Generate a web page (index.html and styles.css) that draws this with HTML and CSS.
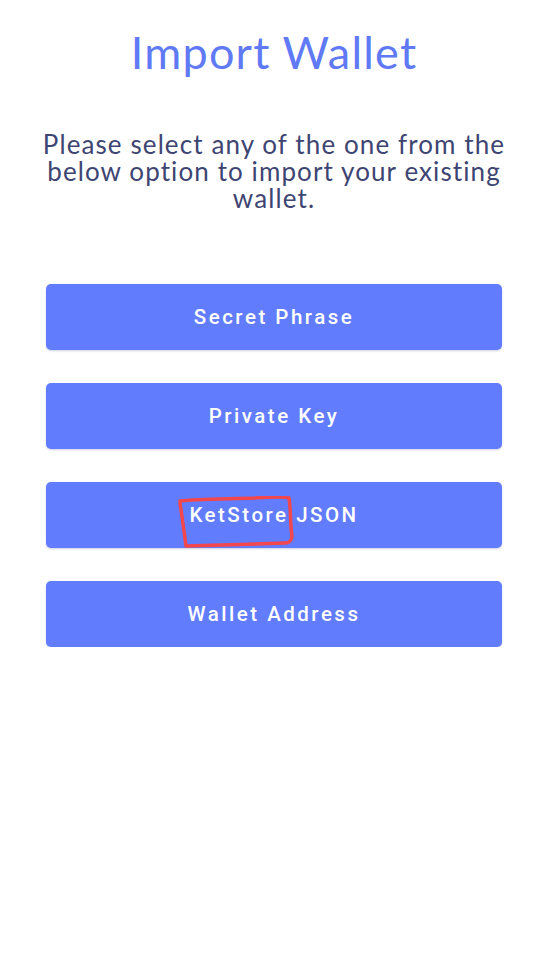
FILE: index.html
```html
<!DOCTYPE html>
<html>
<head>
<meta charset="utf-8">
<link rel="stylesheet" href="styles.css">
</head>
<body>
<main class="page">
  <h1 class="title">Import Wallet</h1>
  <p class="subtitle">Please select any of the one from the below option to import your existing wallet.</p>
  <div class="options">
    <button class="option">Secret Phrase</button>
    <button class="option">Private Key</button>
    <button class="option"><span class="marked">KetStore<svg class="scribble" viewBox="0 0 122 52" width="122" height="52"><path d="M5 5 C 20 3, 50 3, 80 2 C 95 1, 108 0, 114 2 C 116 14, 115 28, 117 40 C 117 44, 114 47, 110 47 C 75 48, 40 49, 11 50 C 9 35, 7 20, 5 7" fill="none" stroke="#f2474d" stroke-width="3.5" stroke-linecap="round" stroke-linejoin="round"/></svg></span> JSON</button>
    <button class="option">Wallet Address</button>
  </div>
</main>
</body>
</html>
```

FILE: styles.css
```css
html, body {
  margin: 0;
  padding: 0;
  background: #ffffff;
}
.page {
  width: 548px;
  display: flex;
  flex-direction: column;
  align-items: center;
}
.title {
  margin: 26px 0 0;
  font-family: Lato, "Noto Sans", sans-serif;
  font-weight: 400;
  font-size: 45px;
  line-height: 52px;
  letter-spacing: 1.2px;
  color: #6079f4;
}
.subtitle {
  margin: 53px 0 0;
  width: 490px;
  text-align: center;
  font-family: Lato, "Noto Sans", sans-serif;
  font-size: 26px;
  line-height: 27px;
  letter-spacing: 1.1px;
  color: #3e4572;
}
.options {
  margin-top: 72px;
  display: flex;
  flex-direction: column;
  gap: 33px;
  width: 456px;
}
.option {
  height: 66px;
  border: none;
  border-radius: 5px;
  background: #627cfe;
  color: #ffffff;
  font-family: Roboto, "Noto Sans", sans-serif;
  font-weight: 500;
  font-size: 20.5px;
  letter-spacing: 2.5px;
  box-shadow: 0 1px 2px rgba(60, 70, 140, 0.25);
  padding: 0;
}
.marked {
  position: relative;
}
.scribble {
  position: absolute;
  left: -14px;
  top: -7px;
  pointer-events: none;
}
```
